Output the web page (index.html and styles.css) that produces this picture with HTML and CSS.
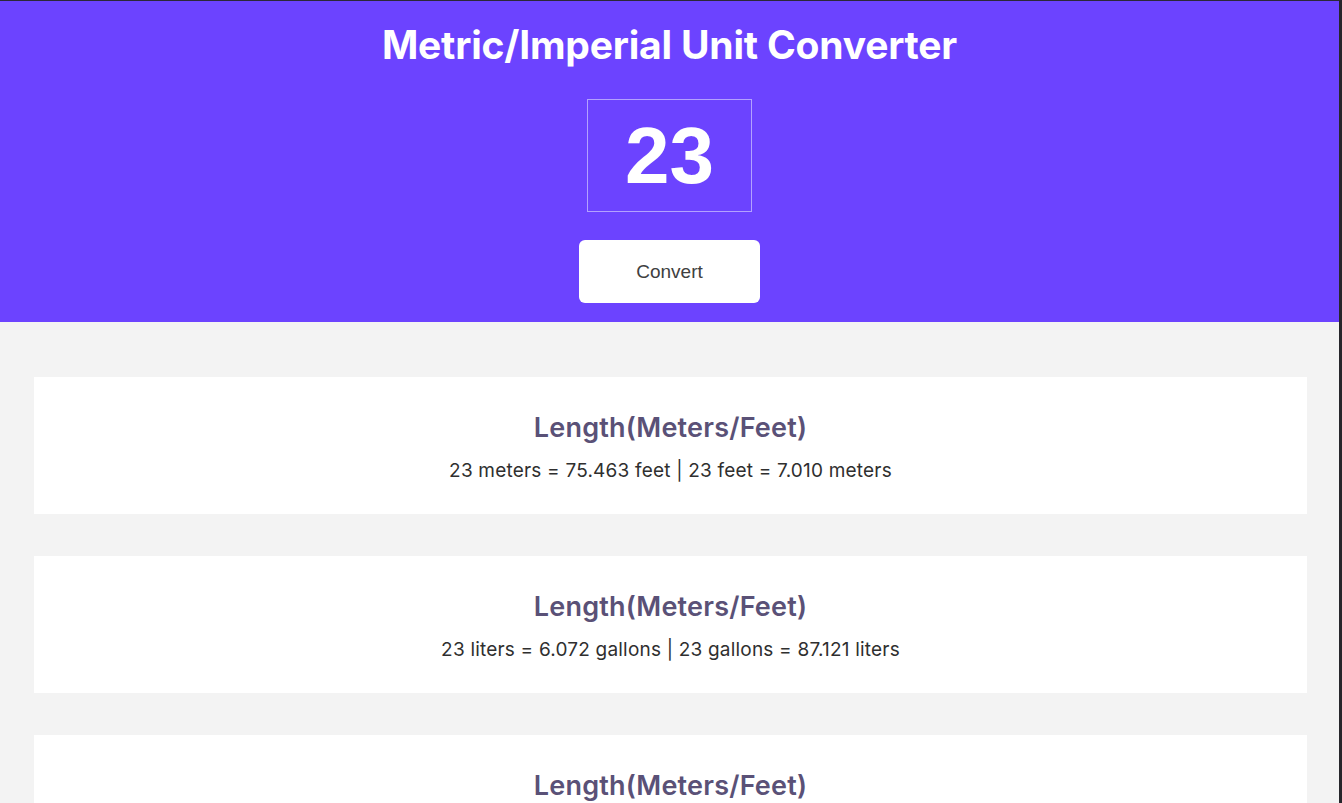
FILE: index.html
```html
<!DOCTYPE html>
<html lang="en">
<head>
<meta charset="utf-8">
<title>Metric/Imperial Unit Converter</title>
<link rel="stylesheet" href="styles.css">
</head>
<body>
<div class="frame">
  <header class="hero">
    <h1 class="hero-title">Metric/Imperial Unit Converter</h1>
    <div class="value-box">23</div>
    <button class="convert-btn" type="button">Convert</button>
  </header>
  <main class="results">
    <section class="card">
      <h2 class="card-title">Length(Meters/Feet)</h2>
      <p class="card-text">23 meters = 75.463 feet | 23 feet = 7.010 meters</p>
    </section>
    <section class="card">
      <h2 class="card-title">Length(Meters/Feet)</h2>
      <p class="card-text">23 liters = 6.072 gallons | 23 gallons = 87.121 liters</p>
    </section>
    <section class="card">
      <h2 class="card-title">Length(Meters/Feet)</h2>
      <p class="card-text">23 kilos = 50.706 pounds | 23 pounds = 10.433 kilos</p>
    </section>
  </main>
</div>
</body>
</html>
```
FILE: styles.css
```css
* { box-sizing: border-box; }
html, body { margin: 0; padding: 0; }
body {
  background: #f3f3f3;
  font-family: Inter, "Noto Sans", sans-serif;
  overflow: hidden;
  height: 803px;
}
.frame {
  border-top: 1px solid #2b2838;
  border-right: 3px solid #26262b;
  height: 803px;
  overflow: hidden;
  background: #f3f3f3;
}
.hero {
  background: #6c43ff;
  display: flex;
  flex-direction: column;
  align-items: center;
  padding: 20px 0 19px;
}
.hero-title {
  margin: 0;
  color: #ffffff;
  font-size: 39px;
  line-height: 48px;
  font-weight: 700;
  letter-spacing: -0.2px;
}
.value-box {
  margin-top: 30px;
  width: 165px;
  height: 113px;
  border: 1px solid #b3a1ff;
  color: #ffffff;
  font-family: "Liberation Sans", Arial, sans-serif;
  font-weight: 700;
  font-size: 80px;
  display: flex;
  align-items: center;
  justify-content: center;
}
.convert-btn {
  margin-top: 28px;
  width: 181px;
  height: 63px;
  border: none;
  border-radius: 6px;
  background: #ffffff;
  color: #404040;
  font-family: "Liberation Sans", Arial, sans-serif;
  font-size: 19px;
  cursor: pointer;
}
.results {
  padding: 55px 32px 0 34px;
  display: flex;
  flex-direction: column;
  gap: 42px;
}
.card {
  background: #ffffff;
  height: 137px;
  flex-shrink: 0;
  padding-top: 35px;
  text-align: center;
}
.card-title {
  margin: 0;
  color: #5a5177;
  font-size: 27px;
  line-height: 32px;
  font-weight: 600;
  letter-spacing: 0.2px;
}
.card-text {
  margin: 16px 0 0;
  color: #2f2f2f;
  font-size: 19px;
  line-height: 22px;
  font-weight: 400;
  letter-spacing: 0.2px;
}
```
